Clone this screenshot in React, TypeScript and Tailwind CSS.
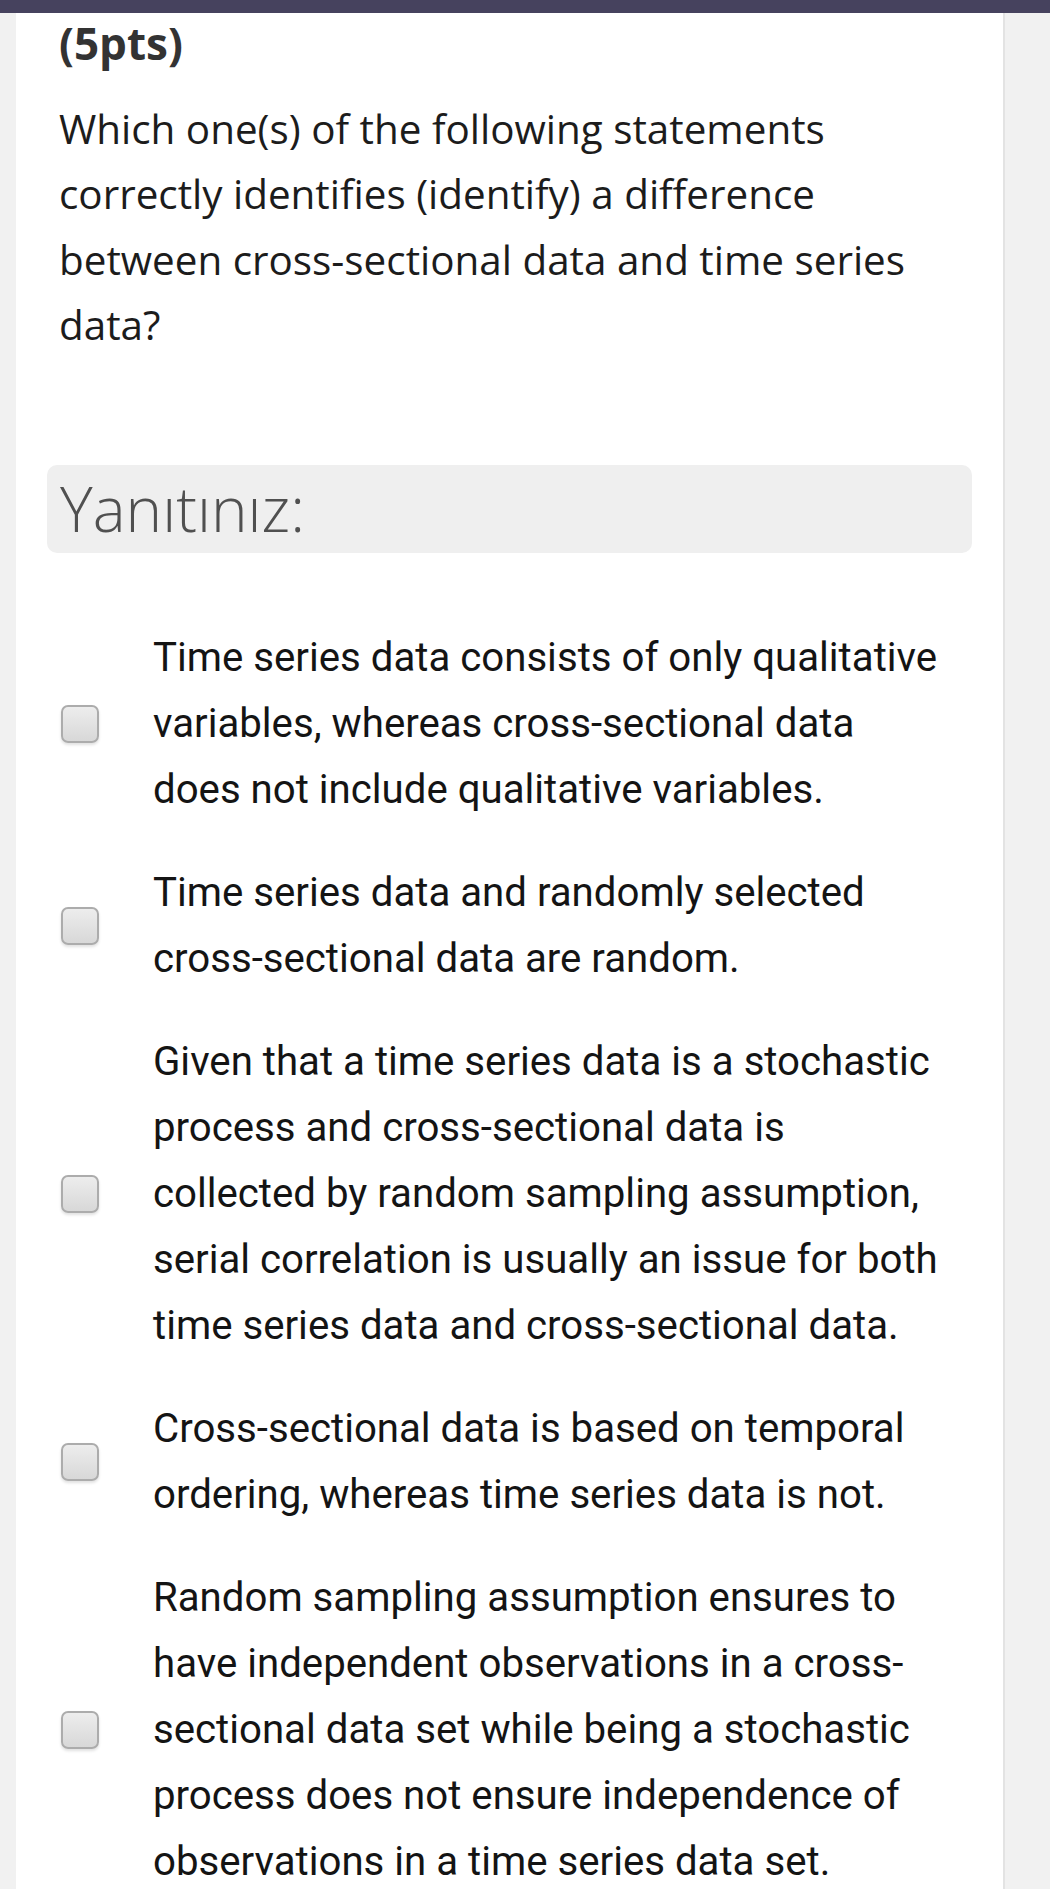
import React from "react";

const options: string[][] = [
  [
    "Time series data consists of only qualitative",
    "variables, whereas cross-sectional data",
    "does not include qualitative variables.",
  ],
  ["Time series data and randomly selected", "cross-sectional data are random."],
  [
    "Given that a time series data is a stochastic",
    "process and cross-sectional data is",
    "collected by random sampling assumption,",
    "serial correlation is usually an issue for both",
    "time series data and cross-sectional data.",
  ],
  ["Cross-sectional data is based on temporal", "ordering, whereas time series data is not."],
  [
    "Random sampling assumption ensures to",
    "have independent observations in a cross-",
    "sectional data set while being a stochastic",
    "process does not ensure independence of",
    "observations in a time series data set.",
  ],
];

function Checkbox() {
  return (
    <div className="w-[38px] h-[38px] shrink-0 rounded-[7px] border-2 border-[#acacac] bg-gradient-to-b from-[#ededed] to-[#d8d8d8] shadow-[0_2px_3px_rgba(0,0,0,0.12)]" />
  );
}

export default function App() {
  return (
    <div className="min-h-[1889px] bg-[#f1f1f1] overflow-hidden">
      <div className="h-[13px] bg-[#46425e]" />
      <div className="ml-[16px] w-[989px] bg-white border-r-2 border-[#e3e3e3] min-h-[1876px] pb-10">
        <div className="pl-[43px] pr-[30px]">
          <div
            className="text-[44px] leading-[60px] font-bold text-[#333]"
            style={{ fontFamily: '"Open Sans", sans-serif' }}
          >
            (5pts)
          </div>
          <p
            className="mt-[23px] text-[40.4px] leading-[65.4px] text-[#1c1c1c]"
            style={{ fontFamily: '"Open Sans", sans-serif' }}
          >
            Which one(s) of the following statements
            <br />
            correctly identifies (identify) a difference
            <br />
            between cross-sectional data and time series
            <br />
            data?
          </p>
        </div>
        <div className="px-[31px] mt-[107px]">
          <div
            className="h-[88px] rounded-[10px] bg-[#efefef] flex items-center pl-[13px] text-[62px] font-light text-[#505050]"
            style={{ fontFamily: '"Open Sans", sans-serif' }}
          >
            Yanıtınız:
          </div>
        </div>
        <div className="mt-[72px] flex flex-col gap-[37px] pl-[45px]">
          {options.map((lines, i) => (
            <div key={i} className="flex items-center">
              <Checkbox />
              <div
                className="ml-[54px] text-[40.2px] leading-[66px] text-[#141414]"
                style={{ fontFamily: "Roboto, sans-serif" }}
              >
                {lines.map((l, j) => (
                  <div key={j} className="whitespace-nowrap">
                    {l}
                  </div>
                ))}
              </div>
            </div>
          ))}
        </div>
      </div>
    </div>
  );
}
